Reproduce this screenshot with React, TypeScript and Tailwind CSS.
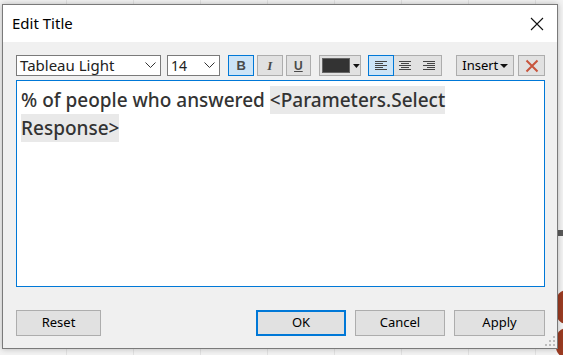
import React from "react";

const ui = { fontFamily: '"Segoe UI", "Noto Sans", "Open Sans", sans-serif' };

function Chevron() {
  return (
    <svg width="11" height="7" viewBox="0 0 11 7" className="shrink-0">
      <path d="M0.5 0.5 L5.5 5.5 L10.5 0.5" fill="none" stroke="#333" strokeWidth="1" />
    </svg>
  );
}

function AlignIcon({ kind }: { kind: "l" | "c" | "r" }) {
  const widths = [12, 8, 12, 8, 12];
  return (
    <svg width="12" height="10" viewBox="0 0 12 10">
      {widths.map((w, i) => {
        const x = kind === "l" ? 0 : kind === "c" ? (12 - w) / 2 : 12 - w;
        return <rect key={i} x={x} y={i * 2} width={w} height="1" fill="#444" />;
      })}
    </svg>
  );
}

export default function App() {
  return (
    <div className="relative w-[563px] h-[355px] overflow-hidden bg-[#f3f3f3]" style={ui}>
      {/* background grid */}
      <div className="absolute inset-0 flex">
        {Array.from({ length: 8 }).map((_, i) => (
          <div key={i} className="w-[67px] shrink-0 border-r border-[#e2e2e2]" />
        ))}
      </div>
      {/* circles on right */}
      <div className="absolute left-[556px] top-[290px] w-[22px] h-[34px] rounded-full bg-[#9b3b22]" />
      <div className="absolute left-[556px] top-[328px] w-[22px] h-[30px] rounded-full bg-[#9b3b22]" />
      <div className="absolute left-[556px] top-[230px] w-[10px] h-[6px] bg-[#5a5a5a]" />

      {/* dialog */}
      <div className="absolute left-[2px] top-[4px] w-[556px] h-[345px] border border-[#7a7a7a] bg-[#f0f0f0] flex flex-col shadow-[0_0_6px_rgba(0,0,0,0.25)]">
        {/* title bar */}
        <div className="h-[37px] bg-white flex items-center justify-between pl-[9px] pr-[13px]">
          <span className="text-[15px] text-black">Edit Title</span>
          <svg width="14" height="14" viewBox="0 0 14 14">
            <path d="M1 1 L13 13 M13 1 L1 13" stroke="#111" strokeWidth="1.1" />
          </svg>
        </div>

        {/* body */}
        <div className="flex-1 flex flex-col pl-[13px] pr-[12px] pt-[13px]">
          {/* toolbar */}
          <div className="flex items-center h-[21px] text-[13px] text-[#222]">
            <div className="w-[147px] h-[21px] bg-white border border-[#7a7a7a] flex items-center justify-between pl-[3px] pr-[4px]">
              <span className="text-[15px] leading-none">Tableau Light</span>
              <Chevron />
            </div>
            <div className="ml-[6px] w-[54px] h-[21px] bg-white border border-[#7a7a7a] flex items-center justify-between pl-[3px] pr-[4px]">
              <span className="text-[14px] leading-none">14</span>
              <Chevron />
            </div>
            <div className="ml-[8px] w-[26px] h-[21px] border border-[#0078d7] bg-[#cce4f7] flex items-center justify-center">
              <span className="text-[13px] font-bold text-[#4a4a4a]" style={{ fontFamily: '"Liberation Sans", sans-serif' }}>B</span>
            </div>
            <div className="ml-[3px] w-[26px] h-[21px] border border-[#adadad] bg-[#e1e1e1] flex items-center justify-center">
              <span className="text-[13px] font-bold italic text-[#4a4a4a]" style={{ fontFamily: '"Liberation Serif", serif' }}>I</span>
            </div>
            <div className="ml-[3px] w-[26px] h-[21px] border border-[#adadad] bg-[#e1e1e1] flex items-center justify-center">
              <span className="text-[12px] font-bold underline text-[#4a4a4a]" style={{ fontFamily: '"Liberation Sans", sans-serif' }}>U</span>
            </div>
            <div className="ml-[8px] w-[42px] h-[21px] border border-[#adadad] bg-[#e1e1e1] flex items-center pl-[2px] gap-[3px]">
              <div className="w-[29px] h-[15px] bg-[#333333] border border-[#666]" />
              <svg width="7" height="4" viewBox="0 0 7 4"><path d="M0 0 L7 0 L3.5 4 Z" fill="#111" /></svg>
            </div>
            <div className="ml-[7px] flex h-[21px] border border-[#adadad] bg-[#e1e1e1]">
              <div className="w-[24px] h-full bg-[#cce4f7] outline outline-1 outline-[#0078d7] flex items-center justify-center">
                <AlignIcon kind="l" />
              </div>
              <div className="w-[24px] h-full flex items-center justify-center">
                <AlignIcon kind="c" />
              </div>
              <div className="w-[24px] h-full flex items-center justify-center">
                <AlignIcon kind="r" />
              </div>
            </div>
            <div className="ml-[14px] w-[59px] h-[21px] border border-[#adadad] bg-[#e1e1e1] flex items-center justify-center gap-[2px]">
              <span className="text-[13px] text-black">Insert</span>
              <svg width="8" height="4" viewBox="0 0 8 4"><path d="M0 0 L8 0 L4 4 Z" fill="#111" /></svg>
            </div>
            <div className="ml-[4px] w-[27px] h-[21px] border border-[#adadad] bg-[#e1e1e1] flex items-center justify-center">
              <svg width="14" height="14" viewBox="0 0 14 14">
                <path d="M1.5 1.5 L12.5 12.5 M12.5 1.5 L1.5 12.5" stroke="#c8553d" strokeWidth="2" />
              </svg>
            </div>
          </div>

          {/* text area */}
          <div className="mt-[4px] h-[207px] bg-white border border-[#0078d7] px-[4px] pt-[5px]">
            <p
              className="text-[19px] leading-[28px] text-[#333333] font-medium"
              style={{ fontFamily: '"Noto Sans", sans-serif' }}
            >
              % of people who answered{" "}
              <span className="bg-[#e9e9e9] py-[1px] [box-decoration-break:clone]">
                &lt;Parameters.Select Response&gt;
              </span>
            </p>
          </div>

          {/* buttons */}
          <div className="mt-[23px] flex items-center text-[13px] text-black">
            <div className="w-[85px] h-[26px] border border-[#adadad] bg-[#e1e1e1] flex items-center justify-center">Reset</div>
            <div className="ml-auto w-[90px] h-[26px] border-2 border-[#0078d7] bg-[#e1e1e1] flex items-center justify-center">OK</div>
            <div className="ml-[9px] w-[90px] h-[26px] border border-[#adadad] bg-[#e1e1e1] flex items-center justify-center">Cancel</div>
            <div className="ml-[9px] w-[91px] h-[26px] border border-[#adadad] bg-[#e1e1e1] flex items-center justify-center">Apply</div>
          </div>
        </div>

        {/* resize grip */}
        <svg className="absolute right-[2px] bottom-[2px]" width="10" height="10" viewBox="0 0 10 10">
          {[
            [8, 0], [8, 4], [4, 4], [8, 8], [4, 8], [0, 8],
          ].map(([x, y], i) => (
            <rect key={i} x={x} y={y} width="2" height="2" fill="#bcbcbc" />
          ))}
        </svg>
      </div>
    </div>
  );
}
